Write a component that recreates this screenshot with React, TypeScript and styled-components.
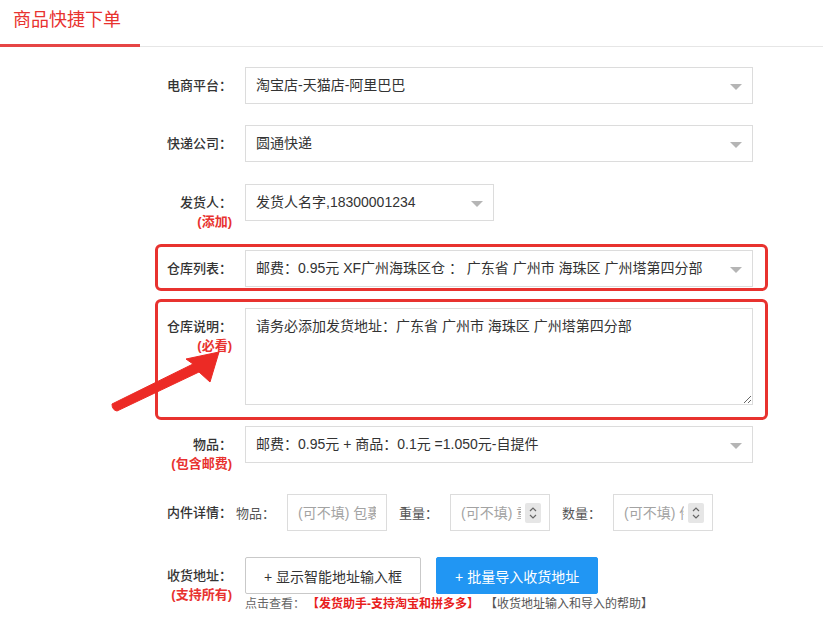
import React from 'react';
import styled, { createGlobalStyle } from 'styled-components';

const GlobalStyle = createGlobalStyle`
  body {
    margin: 0;
    background: #fff;
  }
  * {
    box-sizing: border-box;
  }
`;

const FONT = `"Liberation Sans", "Noto Sans CJK SC", sans-serif`;
const RED = '#e8322f';

const Page = styled.div`
  position: relative;
  width: 823px;
  min-height: 627px;
  background: #fff;
  font-family: ${FONT};
  color: #333;
  overflow: hidden;
`;

const Header = styled.div`
  display: flex;
  height: 47px;
  border-bottom: 1px solid #e6e6e6;
`;

const Tab = styled.div`
  width: 140px;
  height: 47px;
  margin-bottom: -1px;
  padding-left: 13px;
  font-size: 18px;
  line-height: 41px;
  color: ${RED};
  border-bottom: 3px solid #e64545;
`;

const Form = styled.div`
  display: flex;
  flex-direction: column;
  padding: 14px 0 0 155px;
`;

const Row = styled.div<{ $hl?: boolean; $mt?: number; $tight?: boolean; $pad?: string }>`
  display: grid;
  grid-template-columns: 74px 1fr;
  column-gap: ${(p) => (p.$tight ? 4 : 13)}px;
  align-items: start;
  width: 613px;
  margin-top: ${(p) => p.$mt ?? 0}px;
  padding: ${(p) => p.$pad ?? '3px 12px 3px 0'};
  border: 3px solid ${(p) => (p.$hl ? '#e8322f' : 'transparent')};
  border-radius: 6px;
`;

const Label = styled.div`
  display: flex;
  flex-direction: column;
  align-items: flex-end;
  padding-top: 9px;
  font-size: 13px;
  line-height: 19px;
  font-weight: 500;
  color: #333;
  white-space: nowrap;
`;

const Note = styled.span`
  color: ${RED};
  font-weight: bold;
`;

const SelectBox = styled.div<{ $w?: number }>`
  position: relative;
  width: ${(p) => (p.$w ? `${p.$w}px` : '100%')};
  height: 37px;
  padding: 0 30px 0 10px;
  border: 1px solid #dcdcdc;
  background: #fff;
  font-size: 14px;
  line-height: 35px;
  color: #333;
  white-space: nowrap;
  overflow: hidden;

  &::after {
    content: '';
    position: absolute;
    right: 10px;
    top: 16px;
    border-left: 6px solid transparent;
    border-right: 6px solid transparent;
    border-top: 6px solid #b5b5b5;
  }
`;

const TextArea = styled.textarea`
  display: block;
  width: 100%;
  height: 97px;
  padding: 7px 10px;
  border: 1px solid #dcdcdc;
  font-family: ${FONT};
  font-size: 14px;
  line-height: 20px;
  color: #333;
  outline: none;
`;

const Detail = styled.div`
  display: flex;
  align-items: center;
  gap: 12px;
  height: 37px;
`;

const SubLabel = styled.span`
  font-size: 13px;
  color: #555;
  white-space: nowrap;
`;

const FieldWrap = styled.div`
  position: relative;
  width: 100px;
  height: 37px;
`;

const SmallInput = styled.input<{ $num?: boolean }>`
  width: 100%;
  height: 100%;
  padding: ${(p) => (p.$num ? '0 28px 0 10px' : '0 10px')};
  border: 1px solid #dcdcdc;
  font-family: ${FONT};
  font-size: 14px;
  color: #333;
  outline: none;
  -moz-appearance: textfield;

  &::placeholder {
    color: #a3a3a3;
  }
  &::-webkit-inner-spin-button,
  &::-webkit-outer-spin-button {
    -webkit-appearance: none;
    margin: 0;
  }
`;

const Spinner = styled.span`
  position: absolute;
  right: 9px;
  top: 9px;
  width: 16px;
  height: 20px;
  background: #e6e6e6;
  border-radius: 2px;
  display: flex;
  align-items: center;
  justify-content: center;
`;

const Buttons = styled.div`
  display: flex;
  gap: 15px;
`;

const Button = styled.button<{ $primary?: boolean }>`
  height: 37px;
  padding: 0 18px;
  border: 1px solid ${(p) => (p.$primary ? '#2196f3' : '#c9c9c9')};
  border-radius: 2px;
  background: ${(p) => (p.$primary ? '#2196f3' : '#fff')};
  color: ${(p) => (p.$primary ? '#fff' : '#333')};
  font-family: ${FONT};
  font-size: 14px;
  cursor: pointer;
`;

const Help = styled.div`
  margin-top: 2px;
  font-size: 12px;
  line-height: 16px;
  color: #666;
  white-space: nowrap;
`;

const HelpLink = styled.span<{ $red?: boolean }>`
  color: ${(p) => (p.$red ? '#e8201c' : '#555')};
  font-weight: ${(p) => (p.$red ? 'bold' : 'normal')};
  margin-left: ${(p) => (p.$red ? 8 : 12)}px;
`;

const ArrowLayer = styled.svg`
  position: absolute;
  left: 0;
  top: 0;
  pointer-events: none;
`;

const SpinIcon = () => (
  <svg width="10" height="14" viewBox="0 0 10 14" fill="none" stroke="#666" strokeWidth="1.2">
    <path d="M2 5 L5 2 L8 5" />
    <path d="M2 9 L5 12 L8 9" />
  </svg>
);

const NumberField = ({ placeholder }: { placeholder: string }) => (
  <FieldWrap>
    <SmallInput $num type="number" placeholder={placeholder} />
    <Spinner>
      <SpinIcon />
    </Spinner>
  </FieldWrap>
);

export default function App() {
  return (
    <Page>
      <GlobalStyle />
      <Header>
        <Tab>商品快捷下单</Tab>
      </Header>

      <Form>
        <Row>
          <Label>电商平台：</Label>
          <SelectBox>淘宝店-天猫店-阿里巴巴</SelectBox>
        </Row>

        <Row $mt={9}>
          <Label>快递公司：</Label>
          <SelectBox>圆通快递</SelectBox>
        </Row>

        <Row $mt={10}>
          <Label>
            发货人：
            <Note>(添加)</Note>
          </Label>
          <SelectBox $w={249}>发货人名字,18300001234</SelectBox>
        </Row>

        <Row $hl $mt={7} $pad="3px 12px 1px 0">
          <Label>仓库列表：</Label>
          <SelectBox>邮费：0.95元 XF广州海珠区仓 ： 广东省 广州市 海珠区 广州塔第四分部</SelectBox>
        </Row>

        <Row $hl $mt={8} $pad="6px 12px 12px 0">
          <Label>
            仓库说明：
            <Note>(必看)</Note>
          </Label>
          <TextArea defaultValue="请务必添加发货地址：广东省 广州市 海珠区 广州塔第四分部" />
        </Row>

        <Row>
          <Label>
            物品：
            <Note>(包含邮费)</Note>
          </Label>
          <SelectBox>邮费：0.95元 + 商品：0.1元 =1.050元-自提件</SelectBox>
        </Row>

        <Row $mt={9} $tight>
          <Label>内件详情：</Label>
          <Detail>
            <SubLabel>物品：</SubLabel>
            <FieldWrap>
              <SmallInput placeholder="(可不填) 包裹物品名称" />
            </FieldWrap>
            <SubLabel>重量：</SubLabel>
            <NumberField placeholder="(可不填) 重量" />
            <SubLabel>数量：</SubLabel>
            <NumberField placeholder="(可不填) 件数" />
          </Detail>
        </Row>

        <Row $mt={14}>
          <Label>
            收货地址：
            <Note>(支持所有)</Note>
          </Label>
          <div>
            <Buttons>
              <Button>+ 显示智能地址输入框</Button>
              <Button $primary>+ 批量导入收货地址</Button>
            </Buttons>
            <Help>
              点击查看：
              <HelpLink $red>【发货助手-支持淘宝和拼多多】</HelpLink>
              <HelpLink>【收货地址输入和导入的帮助】</HelpLink>
            </Help>
          </div>
        </Row>
      </Form>

      <ArrowLayer width="823" height="627" viewBox="0 0 823 627">
        <path
          d="M112 404 L193 364 L186 359 L219 352 L210 382 L199 372 L117 411 Q112 410 112 404 Z"
          fill="#ec2a25"
          stroke="#ec2a25"
          strokeWidth="1"
          strokeLinejoin="round"
        />
      </ArrowLayer>
    </Page>
  );
}
